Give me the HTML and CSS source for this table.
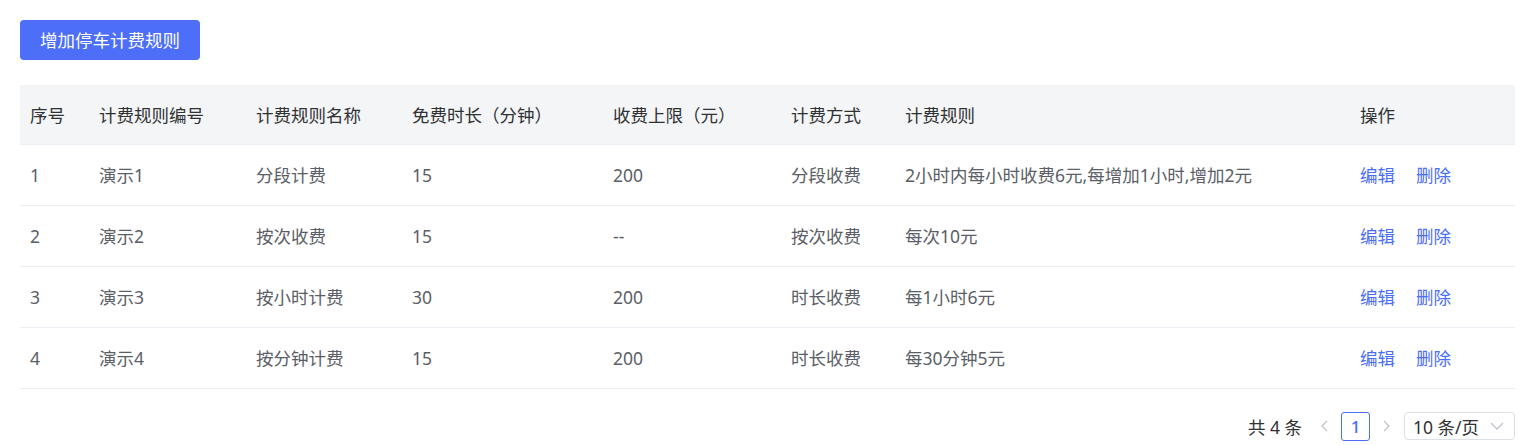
FILE: index.html
```html
<!DOCTYPE html>
<html lang="zh-CN">
<head>
<meta charset="utf-8">
<title>停车计费规则</title>
<link rel="stylesheet" href="styles.css">
</head>
<body>
<div class="page">
  <div class="toolbar">
    <button class="btn-primary">增加停车计费规则</button>
  </div>
  <table class="rules">
    <colgroup>
      <col class="c1"><col class="c2"><col class="c3"><col class="c4"><col class="c5"><col class="c6"><col class="c7"><col class="c8">
    </colgroup>
    <thead>
      <tr>
        <th>序号</th><th>计费规则编号</th><th>计费规则名称</th><th>免费时长（分钟）</th><th>收费上限（元）</th><th>计费方式</th><th>计费规则</th><th>操作</th>
      </tr>
    </thead>
    <tbody>
      <tr>
        <td>1</td><td>演示1</td><td>分段计费</td><td>15</td><td>200</td><td>分段收费</td><td>2小时内每小时收费6元,每增加1小时,增加2元</td>
        <td><a class="op">编辑</a><a class="op">删除</a></td>
      </tr>
      <tr>
        <td>2</td><td>演示2</td><td>按次收费</td><td>15</td><td>--</td><td>按次收费</td><td>每次10元</td>
        <td><a class="op">编辑</a><a class="op">删除</a></td>
      </tr>
      <tr>
        <td>3</td><td>演示3</td><td>按小时计费</td><td>30</td><td>200</td><td>时长收费</td><td>每1小时6元</td>
        <td><a class="op">编辑</a><a class="op">删除</a></td>
      </tr>
      <tr>
        <td>4</td><td>演示4</td><td>按分钟计费</td><td>15</td><td>200</td><td>时长收费</td><td>每30分钟5元</td>
        <td><a class="op">编辑</a><a class="op">删除</a></td>
      </tr>
    </tbody>
  </table>
  <div class="pager">
    <span class="total">共 4 条</span>
    <span class="arrow">
      <svg width="12" height="14" viewBox="0 0 12 14"><path d="M8 2 L3 7 L8 12" fill="none" stroke="#c0c4cc" stroke-width="1.3"/></svg>
    </span>
    <span class="page-num">1</span>
    <span class="arrow">
      <svg width="12" height="14" viewBox="0 0 12 14"><path d="M4 2 L9 7 L4 12" fill="none" stroke="#c0c4cc" stroke-width="1.3"/></svg>
    </span>
    <span class="size-select">
      <span>10 条/页</span>
      <svg width="14" height="10" viewBox="0 0 14 10"><path d="M1 2 L7 8 L13 2" fill="none" stroke="#c0c4cc" stroke-width="1.3"/></svg>
    </span>
  </div>
</div>
</body>
</html>
```

FILE: styles.css
```css
html, body {
  margin: 0;
  padding: 0;
  background: #ffffff;
}
body {
  font-family: "Noto Sans", "Noto Sans CJK SC", sans-serif;
  font-size: 17.5px;
  color: #606266;
}
.page {
  padding: 20px 25px 0 20px;
}
.toolbar {
  display: flex;
}
.btn-primary {
  height: 40px;
  width: 180px;
  padding: 0;
  border: none;
  border-radius: 4px;
  background: #4c6ef8;
  color: #ffffff;
  font-family: "Noto Sans", "Noto Sans CJK SC", sans-serif;
  font-size: 17.5px;
  line-height: 40px;
}
.rules {
  margin-top: 25px;
  width: 1495px;
  border-collapse: collapse;
  table-layout: fixed;
}
.c1 { width: 69px; }
.c2 { width: 157px; }
.c3 { width: 156px; }
.c4 { width: 201px; }
.c5 { width: 178px; }
.c6 { width: 114px; }
.c7 { width: 455px; }
.c8 { width: 165px; }
.rules th {
  background: #f4f5f7;
  color: #303133;
  font-weight: normal;
  text-align: left;
  height: 59px;
  padding: 0 10px;
  line-height: 22px;
  border-bottom: 1px solid #ebeef5;
  white-space: nowrap;
}
.rules td {
  height: 60px;
  padding: 0 10px;
  line-height: 22px;
  border-bottom: 1px solid #ebeef5;
  color: #5b5e66;
  white-space: nowrap;
}
.op {
  color: #4b6ef7;
  margin-right: 21px;
  cursor: pointer;
}
.pager {
  margin-top: 22px;
  width: 1495px;
  display: flex;
  justify-content: flex-end;
  align-items: center;
  height: 30px;
  color: #303133;
}
.total {
  margin-right: 13px;
}
.arrow {
  display: flex;
  align-items: center;
  justify-content: center;
  width: 20px;
  height: 30px;
}
.page-num {
  margin: 0 6px;
  width: 27px;
  height: 27px;
  border: 1px solid #4b6ef7;
  border-radius: 3px;
  color: #4b6ef7;
  display: flex;
  align-items: center;
  justify-content: center;
  font-size: 17px;
  font-weight: 500;
}
.size-select {
  margin-left: 8px;
  width: 111px;
  height: 28px;
  border: 1px solid #dcdfe6;
  border-radius: 4px;
  display: flex;
  align-items: center;
  justify-content: space-between;
  padding: 0 10px 0 8px;
  box-sizing: border-box;
  color: #303133;
}
```
